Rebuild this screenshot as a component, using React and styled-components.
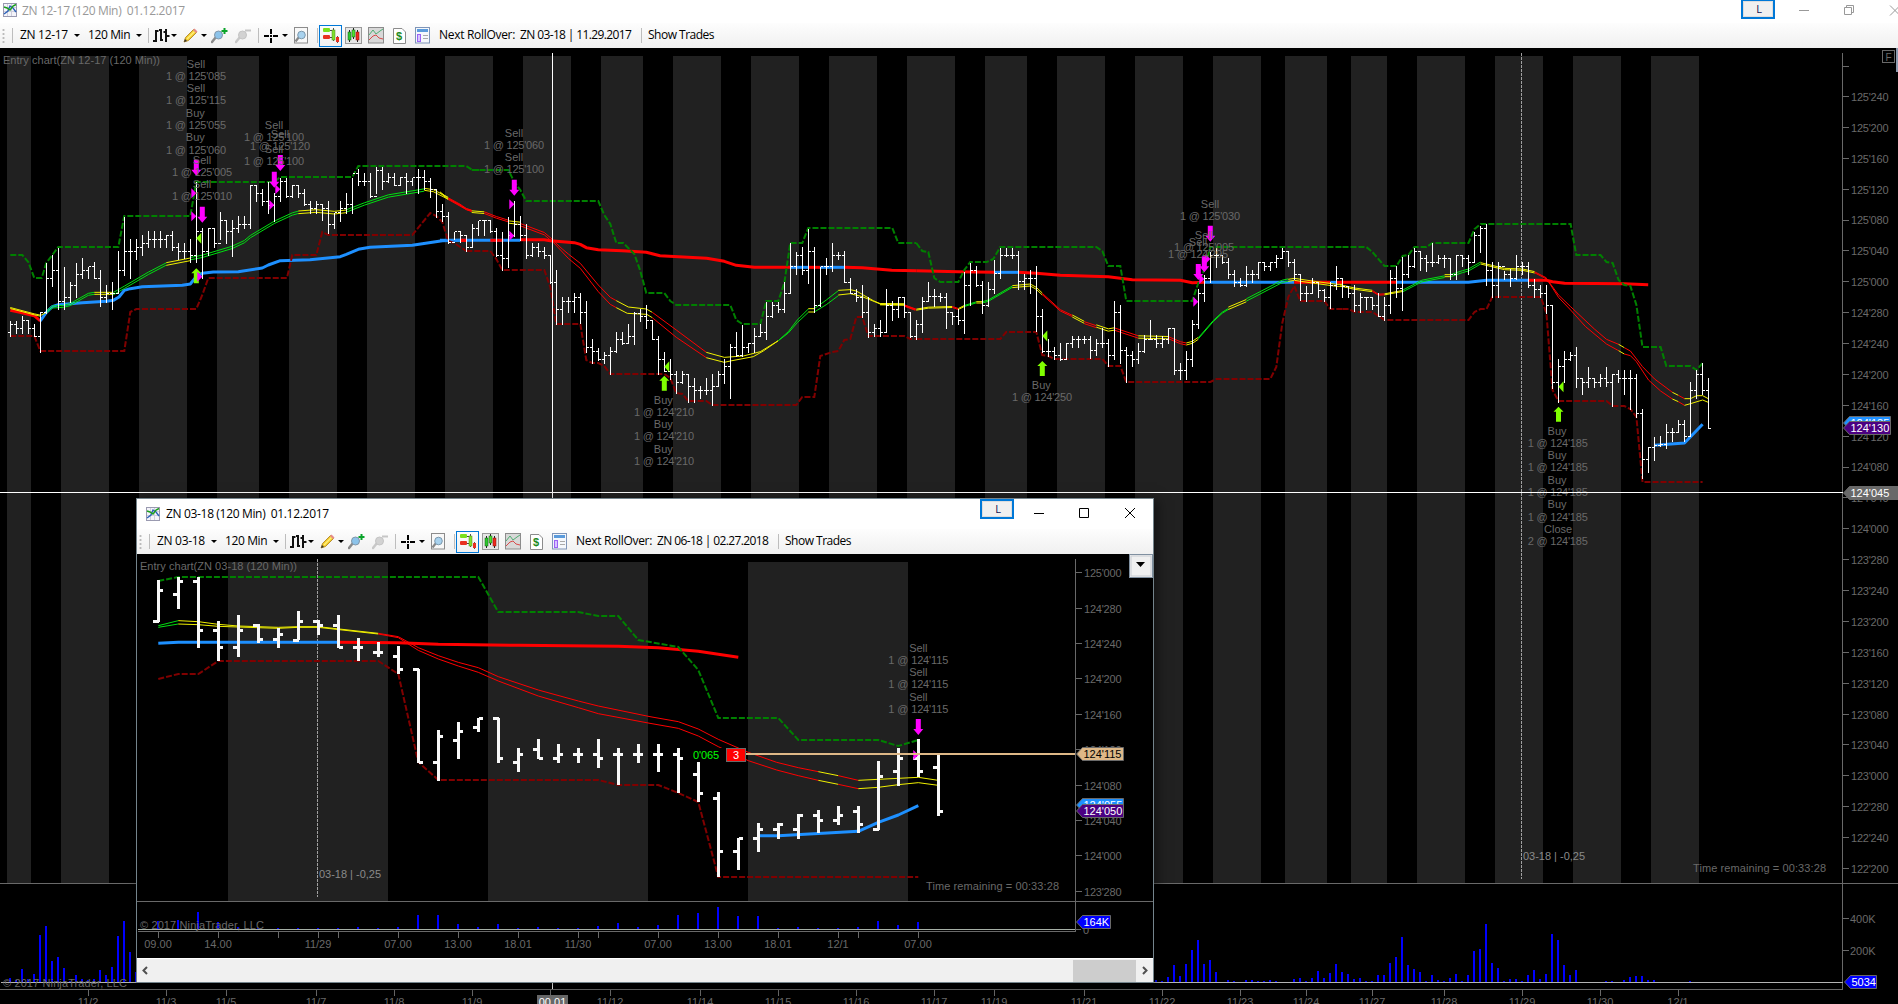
import React from 'react';
import styled, { createGlobalStyle } from 'styled-components';

const GREY = '#696969';
const BAND = '#212121';
const BLUE = '#1e90ff';
const RED = '#ff0000';
const LIME = '#00e010';
const YELLOW = '#f0f000';
const UPPER = '#008000';
const LOWER = '#800000';
const MAGENTA = '#ff00ff';
const CHARTREUSE = '#80ff00';

const GlobalStyle = createGlobalStyle`
  body {
    margin: 0;
    background: #000;
    overflow: hidden;
  }
`;

const Desktop = styled.div`
  position: relative;
  width: 1898px;
  height: 1004px;
  overflow: hidden;
  background: #000;
  font-family: 'Open Sans', 'Noto Sans', sans-serif;
`;

const MainWindow = styled.div`
  display: flex;
  flex-direction: column;
  width: 100%;
  height: 100%;
`;

const FloatingWindow = styled.div`
  position: absolute;
  left: 136px;
  top: 498px;
  width: 1018px;
  height: 485px;
  box-sizing: border-box;
  border: 1px solid #74848c;
  display: flex;
  flex-direction: column;
  background: #000;
  box-shadow: 3px 2px 12px rgba(0, 0, 0, 0.5);
`;

const TitleBar = styled.div`
  display: flex;
  align-items: ${p => (p.active ? 'center' : 'flex-start')};
  flex: none;
  height: ${p => (p.active ? 30 : 23)}px;
  box-sizing: border-box;
  padding-left: ${p => (p.active ? 9 : 3)}px;
  padding-top: ${p => (p.active ? 0 : 3)}px;
  background: #fff;
  color: ${p => (p.active ? '#000' : '#999')};
  white-space: nowrap;
`;

const TitleText = styled.span`
  font-size: 12px;
  line-height: 16px;
  letter-spacing: -0.3px;
  word-spacing: -0.2px;
  margin-left: ${p => (p.active ? 6 : 5)}px;
  white-space: pre;
`;

const Spacer = styled.div`
  flex: 1;
`;

const LinkButton = styled.div`
  flex: none;
  align-self: flex-start;
  width: 34px;
  height: 20px;
  margin-top: ${p => (p.active ? 0 : -4)}px;
  margin-right: ${p => p.gap}px;
  box-sizing: border-box;
  border: 2px solid #0078d7;
  background: #f0f0f0;
  box-shadow: inset 0 0 0 1px #ddd;
  color: #111150;
  font-size: 11px;
  line-height: 15px;
  text-align: center;
  padding-left: 2px;
`;

const WindowGlyphs = styled.svg`
  display: block;
  flex: none;
`;

const Bar = styled.div`
  display: flex;
  align-items: center;
  flex: none;
  height: 25px;
  background: linear-gradient(#fdfdfd, #f0f0f0);
  color: #000;
`;

const Grip = styled.div`
  width: 12px;
  height: 16px;
  flex: none;
  background: radial-gradient(circle, #bbb 1px, transparent 1.2px) 0 0 / 7px 4px repeat-y;
`;

const Sep = styled.div`
  width: 1px;
  height: 15px;
  flex: none;
  background: #bdbdbd;
`;

const Cell = styled.div`
  display: flex;
  align-items: center;
  justify-content: ${p => (p.center ? 'center' : 'flex-start')};
  flex: none;
  width: ${p => p.w}px;
  height: 22px;
  box-sizing: border-box;
  padding-left: ${p => p.pad || 0}px;
  margin-left: ${p => (p.selected ? 1 : 0)}px;
  border: ${p => (p.selected ? '1px solid #0078d7' : 'none')};
`;

const Label = styled.span`
  font-size: 12px;
  line-height: 16px;
  padding-bottom: 2px;
  letter-spacing: ${p => p.track || -0.3}px;
  white-space: pre;
`;

const Caret = styled.span`
  margin-left: ${p => p.gap || 4}px;
  border: 3px solid transparent;
  border-top-color: #000;
  border-bottom: none;
`;

const Plot = styled.svg`
  display: block;
  flex: none;
  font-family: 'Liberation Sans', Arial, sans-serif;
  font-size: 11px;
`;

const ScrollBar = styled.div`
  display: flex;
  align-items: center;
  flex: 1;
  background: #f0f0f0;
  border-top: 1px solid #fff;
`;

const Thumb = styled.div`
  width: 63px;
  height: 22px;
  background: #cdcdcd;
`;

const ScrollButton = styled.svg`
  flex: none;
  width: 17px;
  height: 17px;
`;

/* ---------- icons ---------- */

const icon = (w, h, children) => (
  <svg width={w} height={h} viewBox={`0 0 ${w} ${h}`}>
    {children}
  </svg>
);

const LogoIcon = () =>
  icon(
    14,
    14,
    <>
      <rect x=".5" y=".5" width="13" height="13" fill="#f4f4fa" stroke="#9a9ab0" />
      <path d="M4.500 1V13M8.500 1V13M1 4.500H13M1 8.500H13" stroke="#cfcfdd" />
      <path d="M1 11L5 8L7 3L10 5L13 9" fill="none" stroke="#2d62b8" strokeWidth="1.400" />
      <path d="M1 4L4 5L7 7L10 3L13 1.500" fill="none" stroke="#1ca01c" strokeWidth="1.400" />
    </>
  );

const BarsIcon = () =>
  icon(
    17,
    17,
    <path
      d="M3 3V15M0 14H3M8 2V14M3 4H5.500M6 3H8M8 13H10M13 2V15M10.500 5H13M13 9H16.500"
      stroke="#111"
      strokeWidth="2"
      fill="none"
    />
  );

const PencilIcon = () =>
  icon(
    15,
    15,
    <>
      <path d="M1 14L2.500 9.500L10.500 1.500L13.500 4.500L5.500 12.500Z" fill="#f2cb2c" stroke="#a87a18" strokeWidth=".8" />
      <path d="M4 11L11.500 3.500" stroke="#fff07a" strokeWidth="1.500" />
      <path d="M10 2L11.500 .5L14.500 3.500L13 5Z" fill="#e58a8a" />
      <path d="M1 14L2 11L4 13Z" fill="#333" />
    </>
  );

const LensIcon = ({ muted, plus }) =>
  icon(
    17,
    17,
    <>
      <path d="M5 10L1 15" stroke={muted ? '#c8c8c8' : '#8a8a8a'} strokeWidth="2.500" strokeLinecap="round" />
      <circle cx="7.500" cy="8" r="4" fill={muted ? '#d2d2d2' : '#8cc3ea'} stroke={muted ? '#c4c4c4' : '#8296a8'} />
      {plus ? (
        <path d="M13.500 1V7M10.500 4H16.500" stroke="#0aa32a" strokeWidth="2" />
      ) : (
        <path d="M10 3.500H16" stroke="#c6c6c6" strokeWidth="2" />
      )}
    </>
  );

const CrossIcon = () =>
  icon(16, 16, <path d="M7 1V6M7 10V15M0 8H5M9 8H14M6 8H8" stroke="#000" strokeWidth="2" />);

const PageLensIcon = () =>
  icon(
    16,
    17,
    <>
      <rect x="1.500" y=".5" width="13" height="15.500" fill="#f8f8f8" stroke="#8c8c8c" />
      <path d="M6 10L2.500 14.500" stroke="#888" strokeWidth="2.200" />
      <circle cx="8.500" cy="8" r="3.800" fill="#a8d2ee" stroke="#7b98ad" />
    </>
  );

const TraderIcon = () =>
  icon(
    16,
    17,
    <>
      <path d="M7 3.500H10.500M7 10.500H10.500" stroke="#444" />
      <rect x="0" y="1" width="7" height="4" rx="1" fill="#7be01c" />
      <rect x="0" y="8" width="7" height="4" rx="1" fill="#e83020" />
      <path d="M10.500 1V14M14.500 9V16" stroke="#555" />
      <rect x="9" y="3" width="3" height="10" fill="#7fe02c" stroke="#4c8c18" strokeWidth=".5" />
      <rect x="13" y="10" width="3" height="5" fill="#e83020" />
    </>
  );

const CandlesIcon = () =>
  icon(
    17,
    17,
    <>
      <rect x=".5" y=".5" width="16" height="16" fill="#e6e6e6" stroke="#9a9a9a" />
      <path d="M4.500 3V15M8.500 1V12M12.500 3V15" stroke="#222" />
      <rect x="3" y="5" width="3" height="8" fill="#2fc62f" stroke="#175d17" strokeWidth=".5" />
      <rect x="7" y="3" width="3" height="7" fill="#4fe02f" stroke="#175d17" strokeWidth=".5" />
      <rect x="11" y="5" width="3" height="8" fill="#f02a1c" stroke="#7c1510" strokeWidth=".5" />
    </>
  );

const IndicatorIcon = () =>
  icon(
    16,
    17,
    <>
      <rect x=".5" y=".5" width="15" height="15.500" fill="#d8d8d8" stroke="#8c8c8c" />
      <path d="M1 8L5 3L8 7L12 4L15 2" fill="none" stroke="#4fae72" />
      <path d="M1 13L5 9L8 8L11 11L15 12" fill="none" stroke="#d84a4a" />
    </>
  );

const DollarIcon = () =>
  icon(
    13,
    16,
    <>
      <path d="M.5 .5H9L12.500 4V15.500H.5Z" fill="#fff" stroke="#8c8c8c" />
      <text x="3" y="12" fontSize="11" fontWeight="bold" fontFamily="Liberation Sans, sans-serif" fill="#1c8a1c">
        $
      </text>
    </>
  );

const PropertiesIcon = () =>
  icon(
    15,
    17,
    <>
      <rect x=".5" y=".5" width="14" height="15.500" fill="#f5f8fc" stroke="#7f95b8" />
      <rect x="2" y="2" width="11" height="3" fill="#5b9bdc" />
      <rect x="2.500" y="7.500" width="3" height="7" fill="#d8c4ff" stroke="#9a63f5" />
      <path d="M8 8.500H13M8 11.500H13" stroke="#aaa" />
    </>
  );

/* ---------- toolbar ---------- */

function ChartToolbar({ contract, next }) {
  return (
    <Bar>
      <Grip />
      <Sep />
      <Cell w={69} pad={7}>
        <Label>{contract}</Label>
        <Caret gap={6} />
      </Cell>
      <Cell w={66} pad={6}>
        <Label track={-0.38}>120 Min</Label>
        <Caret gap={6} />
      </Cell>
      <Sep />
      <Cell w={31} pad={4}>
        <BarsIcon />
        <Caret gap={1} />
      </Cell>
      <Cell w={29} pad={3}>
        <PencilIcon />
        <Caret gap={3} />
      </Cell>
      <Cell w={23} pad={2}>
        <LensIcon plus />
      </Cell>
      <Cell w={26} pad={3}>
        <LensIcon muted />
      </Cell>
      <Sep />
      <Cell w={32} pad={5}>
        <CrossIcon />
        <Caret gap={2} />
      </Cell>
      <Cell w={26} pad={2}>
        <PageLensIcon />
      </Cell>
      <Sep />
      <Cell w={23} center selected>
        <TraderIcon />
      </Cell>
      <Cell w={22} center>
        <CandlesIcon />
      </Cell>
      <Cell w={24} center>
        <IndicatorIcon />
      </Cell>
      <Cell w={22} center>
        <DollarIcon />
      </Cell>
      <Cell w={24} center>
        <PropertiesIcon />
      </Cell>
      <Cell w={83} pad={5}>
        <Label>Next RollOver:</Label>
      </Cell>
      <Cell w={124} pad={3}>
        <Label track={-0.62}>{next}</Label>
      </Cell>
      <Sep />
      <Cell w={90} pad={6}>
        <Label track={-0.5}>Show Trades</Label>
      </Cell>
    </Bar>
  );
}

/* ---------- chart data ---------- */

// Sample grids: every series is stored in grid units and projected to pixels.
const A = { ox: 0, oy: 50, kx: 3, ky: 3 };
const B = { ox: 440, oy: 100, kx: 3, ky: 3 };
const C = { ox: 880, oy: 180, kx: 3, ky: 3 };
const D = { ox: 1340, oy: 180, kx: 2.81, ky: 3 };
const P = { ox: 130, oy: 490, kx: 3, ky: 3 };

// high,low,close - every bar opens on the previous close
const mainBars = [
  [A, '812,858,823 812,848,835 798,848,812 810,848,835 822,858,858 785,905,788 640,790,685 615,708,660 595,778,755 650,778,742 697,755,707 638,742,672 625,685,660 650,685,648 636,685,685 660,767,742 705,755,730 697,778,730 603,730,660 500,675,603 567,685,603 567,628,592 555,615,580 543,592,567 543,592,567 543,592,567 555,592,555 543,600,592 580,628,603 580,625,603 567,637,615 395,637,545 535,685,603 535,615,535 535,592,580 487,567,510 510,580,545 510,617,535 498,545,522 498,535,522 406,535,406 406,453,430 418,465,453 395,488,465 430,513,440 383,453,395 383,440,440 406,440,406 406,440,430 418,465,463 453,488,475 453,488,463 463,510,475 453,550,522 488,535,488 453,513,475 430,488,463 383,488,370 358,405,395 370,405,395 370,440,440 350,430,360 350,418,395 370,395,382 370,406,405 380,405,382 370,430,395 383,405,383 358,430,383 360,418,395 383,440,418 418,500,485 462,512,498'],
  [B, '337,430,428 395,418,395 393,425,405 407,453,442 373,442,385 362,405,362 360,405,362 362,397,395 385,468,465 395,510,475 350,500,405 303,408,373 348,420,407 373,475,465 430,467,442 430,467,453 442,475,465 465,548,548 510,673,628 592,673,603 592,637,603 580,637,592 580,670,637 603,755,742 718,790,755 743,780,778 755,790,767 742,823,755 697,755,718 697,732,730 672,730,708 637,732,640 628,662,650 616,685,660 660,718,718 708,822,778 755,813,813 778,837,823 812,880,848 812,850,823 823,905,858 835,905,872 858,895,872 835,882,872 823,915,858 812,858,823 778,848,800 732,893,742 697,767,765 675,767,742 730,755,730 685,755,708 672,708,697 605,718,650 605,650,616 605,637,628 545,637,580 430,580,500 455,523,465 442,523,512 388,548,453 442,637,615 500,617,500 475,523,498 430,512,465 455,477,465 453,547,547 535,580,580 567,603,592 555,650,637 592,710,697 673,708,685 660,707,697 567,697,616 603,660,628 592,650,592 592,650,637 637,710,710'],
  [C, '420,478,433 350,457,363 307,363,350 327,378,350 340,363,352 340,445,397 397,432,408 387,433,420 275,458,315 250,375,270 258,317,315 302,398,375 307,377,328 240,340,280 203,293,225 203,228,225 203,235,225 213,328,305 283,328,295 270,340,295 258,453,408 387,515,515 478,528,513 502,538,525 490,540,537 490,538,490 468,502,478 468,502,478 468,490,478 468,535,512 478,525,490 445,502,490 478,558,525 363,538,397 375,550,512 502,607,525 513,558,538 490,550,513 465,515,478 420,478,478 465,502,490 468,502,478 445,490,445 445,583,570 550,597,570 513,597,537 420,558,433 327,445,340 285,363,295 215,305,225 205,260,225 228,248,247 235,295,283 270,317,307 295,318,317 258,317,283 270,305,283 247,293,247 247,270,260 247,270,247 225,260,235 203,235,213 213,258,247 237,297,283 283,360,340 317,363,340 295,340,307 307,352,330 328,363,352 305,385,317 258,328,295'],
  [D, '295,352,318 318,352,340 316,392,375 340,395,352 352,387,352 352,387,375 340,408,408 352,420,375 270,398,295 258,352,325 232,390,283 225,290,258 205,260,213 213,270,235 225,272,247 190,258,247 225,250,235 225,260,235 235,297,283 225,297,225 225,258,235 225,283,247 155,247,167 137,215,145 133,316,270 247,352,316 247,350,258 272,297,283 268,317,295 225,297,258 247,283,260 247,320,316 297,352,328 316,350,340 316,400,375 375,625,607 537,665,560 513,607,537 515,540,525 502,620,595 595,642,607 560,620,595 597,620,607 583,617,595 560,617,607 583,677,583 570,607,595 570,642,595 570,688,595 583,710,700 688,895,838 802,875,802 770,840,795 768,797,793 732,803,757 745,782,757 720,757,732 720,783,768 607,768,630 570,655,583 550,642,630 593,745,745'],
];

// high,low,open,close
const popupBars =
  '270,395,395,300 260,357,313,273 260,473,273,421 392,513,421,473 375,500,473,421 403,460,406,449 415,473,449,433 363,450,450,394 390,435,394,406 375,475,406,472 445,513,472,472 457,500,487,487 468,553,499,538 537,820,538,817 720,872,817,739 697,807,751,724 683,725,712,685 683,818,685,805 773,846,817,793 747,808,778,805 762,818,805,793 773,818,793,793 747,833,793,805 775,885,793,793 762,818,793,793 762,845,793,793 773,910,793,805 816,937,852,910 907,1160,925,1084 1043,1140,1084,1045 1000,1085,1045,1018 1000,1047,1018,1003 973,1047,1018,975 961,1030,976,991 948,1005,991,976 948,1030,964,1003 813,1020,1018,859 773,887,844,805 747,860,805,844 795,977,832,965';

const mainVolume = {
  0: '4 2 13 3 8 47 56 21 25 14 1 7 3 2 3 12 7 15 46 61 30 10',
  191: '2 1 5 17 6 18 32 42 18 22 10 0 2 1 0 2 2 1 1 2 1 0 0 3 4 1 4 11 4 9 18 10 8 3 4 1 1 7 7 19 25 45 17 13 10 1 7 2 1 4 8 1 7 31 33 58 19 14 1 3 3 1 7 12 3 8 48 42 17 7 12 0 0 0 0 1 1 0 2 5 6 6 2 2 0 0 0 0 0 1',
};
const popupVolume = '8 9 17 7 2 1 1 1 1 1 2 1 2 14 14 5 2 5 1 2 1 1 3 6 2 4 14 16 22 13 13 1 2 1 1 2 8 4 7';

const upperBand = [
  [A, '31,615 67,615 85,635 103,685 125,685 139,640 175,592 355,592 373,499 571,499 589,395 823,395 841,382 1057,382 1075,349 1399,349 1417,361 1440,361'],
  [B, '95,211 205,211 223,245 241,270 259,304 475,304 493,345 511,373 529,430 550,430 583,463 600,510 619,580 673,580 691,604 709,616 871,616 889,660 907,673 961,673 979,604 1015,604 1033,550 1051,430 1087,430 1105,385 1357,385 1375,430 1429,430'],
  [C, '109,190 127,213 145,215 163,295 181,307 235,307 253,270 271,247 320,247 340,238 361,202 649,202 667,213 685,259 721,259 739,364 937,364 955,310 973,270 991,202 1387,202'],
  [D, '7,202 74,202 91,215 125,259 159,259 176,227 192,225 209,202 243,202 260,190 361,190 378,147 395,133 648,133 664,226 732,226 749,247 766,248 783,300 799,315 816,317 833,375 850,502 901,502 917,559 985,559 1002,570 1019,550'],
];

const lowerBand = [
  [A, '31,858 103,858 121,904 373,904 391,787 409,778 589,778 607,735 625,685 861,685 877,616 949,616 967,547 985,555 1237,555 1291,490 1309,497 1327,515 1345,574 1363,580 1381,592 1399,604'],
  [B, '79,454 151,454 169,478 187,511 313,511 331,560 349,673 421,673 439,780 457,790 475,790 493,797 511,823 673,823 691,835 709,880 727,882 745,904 799,904 817,915 1069,915 1087,892 1123,892 1141,767 1177,755 1195,752 1213,720 1231,718 1249,650 1267,650 1285,709 1393,709 1411,718 1429,718'],
  [C, '109,478 361,478 379,457 469,457 487,525 505,527 523,538 667,538 685,559 721,559 739,607 991,607 1009,596 1171,596 1189,560 1207,430 1225,350 1243,318 1261,364 1333,364 1351,388 1387,388'],
  [D, '7,388 24,388 41,397 91,397 125,421 361,421 378,397 395,388 412,386 428,352 564,352 580,400 597,630 614,664 749,664 766,677 799,677 816,688 833,712 850,907 1019,907'],
];

const baseline = [
  [A, RED, '31,781 60,787 103,797 121,813'],
  [A, BLUE, '121,813 139,787 157,770 175,764 247,758 320,754 340,751 357,741 373,721 391,716 427,710 547,706 571,702 589,680 607,670 640,666 715,665 787,654 805,645 841,632 930,629 1021,620 1039,613 1075,598 1110,592 1237,586 1327,572 1381,571'],
  [B, BLUE, '0,421 241,421'],
  [A, RED, '1383,571 1399,571'],
  [B, RED, '61,421 79,421'],
  [B, RED, '151,421 190,421'],
  [B, RED, '241,419 313,419 331,422 403,428 421,433 439,443 475,449 547,452 619,457 660,467 800,475 853,484 889,496 943,502 1051,502'],
  [B, BLUE, '1051,502 1105,502'],
  [B, RED, '1105,502 1141,502'],
  [B, BLUE, '1141,502 1213,502'],
  [B, RED, '1213,502 1267,503 1355,511 1429,512'],
  [C, RED, '109,272 235,275 343,277'],
  [C, BLUE, '343,277 415,277'],
  [C, RED, '415,277 469,280 541,286 685,290 757,299 901,301 937,308 973,307'],
  [C, BLUE, '973,307 1243,307'],
  [C, RED, '1243,307 1351,307'],
  [C, BLUE, '1351,307 1369,307'],
  [C, RED, '1369,307 1387,307'],
  [D, RED, '0,307 159,307'],
  [D, BLUE, '159,307 361,307 412,301 530,301'],
  [D, RED, '530,301 580,301 597,305 631,310 799,311 866,314'],
  [D, BLUE, '884,796 968,789 1019,733'],
];

// grid, colour, points, distance between the twin lines
const averages = [
  [A, YELLOW, '31,774 103,793 121,797', 3],
  [A, YELLOW, '121,797 139,787', 0],
  [A, LIME, '139,786 157,771 190,769 210,764 265,733 283,730', 6],
  [A, YELLOW, '283,730 340,730', 6],
  [A, LIME, '340,731 373,712 445,670 499,642', 7],
  [A, YELLOW, '499,642 571,628', 8],
  [A, LIME, '571,626 607,619 697,592 733,575 751,560 823,517 877,492 895,487', 7],
  [A, YELLOW, '895,487 949,483 1003,488 1039,484', 8],
  [A, LIME, '1039,483 1093,462 1165,438 1273,420', 7],
  [A, YELLOW, '1273,418 1300,422 1345,445', 6],
  [A, RED, '1345,445 1380,464 1399,477 1415,482', 3],
  [B, YELLOW, '0,277 25,297', 3],
  [B, RED, '25,297 80,328 95,333', 3],
  [B, YELLOW, '95,335 133,338', 5],
  [B, RED, '133,338 169,352 205,363', 5],
  [B, YELLOW, '205,366 241,370', 7],
  [B, RED, '241,374 313,401 340,424', 7],
  [B, RED, '340,422 367,447 385,462 421,490 475,555 511,592 529,602', 0],
  [B, RED, '340,427 385,475 421,505 475,575 511,613 529,623', 0],
  [B, YELLOW, '529,602 565,621 619,627 637,637', 0],
  [B, YELLOW, '529,623 562,640 620,643 637,653', 0],
  [B, RED, '637,637 709,690 799,757', 0],
  [B, RED, '637,653 709,712 799,773', 0],
  [B, YELLOW, '799,757 853,772 910,768 961,755 1015,722', 0],
  [B, YELLOW, '799,773 853,787 871,783 940,770 970,753 1015,722', 0],
  [B, LIME, '1015,722 1045,695 1072,660 1105,627', 0],
  [B, LIME, '1015,722 1045,699 1072,668 1105,637', 0],
  [B, YELLOW, '1105,631 1123,631', 10],
  [B, LIME, '1123,626 1159,600 1195,572', 0],
  [B, LIME, '1123,636 1159,614 1195,587', 0],
  [B, YELLOW, '1195,571 1231,569 1249,573 1300,602 1321,611', 0],
  [B, YELLOW, '1195,585 1231,581 1267,590 1321,612', 0],
  [B, YELLOW, '1321,612 1393,613', 3],
  [B, RED, '1393,617 1425,629', 3],
  [C, YELLOW, '0,373 73,374', 3],
  [C, RED, '73,376 109,389', 3],
  [C, YELLOW, '109,389 145,383 217,381', 3],
  [C, RED, '217,381 235,387', 3],
  [C, YELLOW, '235,387 253,378', 3],
  [C, LIME, '253,378 289,367', 3],
  [C, YELLOW, '289,367 307,367', 4],
  [C, LIME, '307,367 325,362 397,320', 4],
  [C, YELLOW, '397,320 451,315 469,325 487,342', 6],
  [C, RED, '487,342 541,391 577,408', 4],
  [C, YELLOW, '577,408 613,427', 6],
  [C, RED, '613,428 649,440', 6],
  [C, YELLOW, '649,438 685,450 703,447', 7],
  [C, RED, '703,447 775,471', 7],
  [C, YELLOW, '775,471 865,473', 7],
  [C, RED, '865,473 901,488 919,492', 6],
  [C, YELLOW, '919,492 937,487 955,475', 6],
  [C, LIME, '955,475 1000,423 1027,398 1045,387', 3],
  [C, YELLOW, '1045,385 1099,362', 7],
  [C, LIME, '1099,360 1207,304 1225,300', 7],
  [C, YELLOW, '1225,301 1243,298 1297,306 1370,316 1387,316', 6],
  [D, YELLOW, '0,316 41,326 91,333', 4],
  [D, RED, '91,333 108,344 125,343', 3],
  [D, YELLOW, '125,343 176,333', 3],
  [D, LIME, '176,333 230,303 294,290', 5],
  [D, YELLOW, '294,287 311,287', 6],
  [D, LIME, '311,287 344,275 361,270 395,249', 6],
  [D, YELLOW, '395,250 462,267 513,269 547,277', 4],
  [D, RED, '547,277 580,295', 3],
  [D, RED, '580,295 614,345 648,380 715,447 749,478 783,493', 0],
  [D, RED, '580,295 614,352 648,390 690,440 749,492 783,512', 0],
  [D, YELLOW, '783,493 799,503', 0],
  [D, YELLOW, '783,512 799,522', 0],
  [D, RED, '799,503 816,513 850,560 884,597 934,637', 0],
  [D, RED, '799,522 816,527 833,545 867,600 901,633 934,657', 0],
  [D, YELLOW, '934,637 951,646', 0],
  [D, YELLOW, '934,657 951,665', 0],
  [D, RED, '951,646 968,656', 0],
  [D, RED, '951,665 968,676', 0],
  [D, YELLOW, '968,656 985,656 1002,647 1019,647 1035,656', 0],
  [D, YELLOW, '968,676 985,671 1019,660 1035,667', 0],
];

const popupUpper = [
  [P, '85,273 145,262 1045,262 1105,367 1345,367 1405,379 1465,379 1525,449 1645,472 1705,540 1765,685 1945,685 2005,751 2245,751 2305,767 2365,751'],
];
const popupLower = [
  [P, '85,566 145,553 205,553 265,514 745,514 805,553 865,817 925,871 1405,871 1465,886 1585,886 1645,910 1705,937 1765,1162 2365,1162'],
];
const popupBaseline = [
  [P, BLUE, '85,460 145,457 625,457'],
  [P, RED, '625,457 805,458 925,463 1165,466 1465,469 1585,473 1705,484 1825,502'],
  [P, BLUE, '1885,1037 1945,1037 2185,1024 2245,997 2305,975 2365,947'],
];
const popupAverages = [
  [P, LIME, '85,407 145,392', 0],
  [P, LIME, '85,412 145,402', 0],
  [P, YELLOW, '145,392 205,395 265,403 325,408 445,412 505,410 565,410 745,430', 0],
  [P, YELLOW, '145,402 205,404 265,409 325,411 445,415 505,412 565,412 745,432', 0],
  [P, RED, '745,430 805,440 865,473 925,497 985,517 1045,533 1105,560 1225,600 1345,633 1405,648 1560,680 1645,695 1705,717 1765,748 1855,787 1940,817 2005,833 2065,845', 0],
  [P, RED, '745,432 805,443 865,481 925,507 985,528 1045,547 1105,573 1225,618 1345,653 1405,671 1560,700 1645,715 1705,738 1765,770 1855,812 1940,840 2005,857 2065,871', 0],
  [P, YELLOW, '2065,845 2125,857', 0],
  [P, YELLOW, '2065,871 2125,883', 0],
  [P, RED, '2125,857 2185,871', 0],
  [P, RED, '2125,883 2185,896', 0],
  [P, YELLOW, '2185,871 2245,868 2305,865 2365,862 2425,871', 0],
  [P, YELLOW, '2185,896 2245,892 2305,884 2365,878 2425,886', 0],
];

const mainBands = [
  [7, 31], [61, 109], [139, 187], [217, 259], [289, 337], [367, 415], [445, 493], [523, 571],
  [601, 643], [673, 721], [751, 799], [829, 877], [907, 955], [985, 1027], [1057, 1105],
  [1135, 1183], [1213, 1261], [1285, 1327], [1351, 1387], [1417, 1465], [1495, 1543],
  [1573, 1621], [1651, 1699],
];
const popupBands = [[228, 388], [488, 648], [748, 908]];

const mainTrades = [
  [A, 588, 42, 'Sell'], [A, 588, 78, "1 @ 125'085"], [A, 588, 115, 'Sell'], [A, 588, 150, "1 @ 125'115"],
  [A, 586, 190, 'Buy'], [A, 588, 225, "1 @ 125'055"], [A, 586, 262, 'Buy'], [A, 588, 300, "1 @ 125'060"],
  [A, 606, 330, 'Sell'], [A, 606, 366, "1 @ 125'005"], [A, 606, 403, 'Sell'], [A, 606, 438, "1 @ 125'010"],
  [A, 822, 225, 'Sell'], [A, 822, 262, "1 @ 125'100"], [A, 840, 252, 'Sell'], [A, 840, 288, "1 @ 125'120"],
  [A, 822, 297, 'Sell'], [A, 822, 333, "1 @ 125'100"],
  [B, 222, 100, 'Sell'], [B, 222, 135, "1 @ 125'060"], [B, 222, 172, 'Sell'], [B, 222, 208, "1 @ 125'100"],
  [B, 670, 901, 'Buy'], [B, 672, 936, "1 @ 124'210"], [B, 670, 973, 'Buy'], [B, 672, 1008, "1 @ 124'210"],
  [B, 670, 1048, 'Buy'], [B, 672, 1084, "1 @ 124'210"],
  [C, 990, 72, 'Sell'], [C, 990, 108, "1 @ 125'030"], [C, 972, 165, 'Sell'], [C, 972, 201, "1 @ 125'005"],
  [C, 954, 187, 'Sell'], [C, 954, 222, "1 @ 124'295"], [C, 484, 615, 'Buy'], [C, 486, 652, "1 @ 124'250"],
  [D, 610, 753, 'Buy'], [D, 612, 790, "1 @ 124'185"], [D, 610, 826, 'Buy'], [D, 612, 862, "1 @ 124'185"],
  [D, 610, 901, 'Buy'], [D, 612, 937, "1 @ 124'185"], [D, 610, 973, 'Buy'], [D, 612, 1011, "1 @ 124'185"],
  [D, 613, 1048, 'Close'], [D, 612, 1084, "2 @ 124'185"],
];
const popupTrades = [
  [P, 2365, 474, 'Sell'], [P, 2365, 511, "1 @ 124'115"], [P, 2365, 547, 'Sell'],
  [P, 2365, 583, "1 @ 124'115"], [P, 2365, 621, 'Sell'], [P, 2365, 658, "1 @ 124'115"],
];

const mainMarkers = [
  ['sell', A, 589, 377], ['sell', A, 607, 518], ['sell', A, 823, 413], ['sell', A, 841, 363],
  ['sell', B, 223, 287], ['sell', C, 991, 185], ['sell', C, 973, 277], ['sell', C, 955, 300],
  ['buy', A, 589, 655], ['buy', B, 673, 827], ['buy', C, 487, 543], ['buy', D, 614, 680],
  ['out', A, 589, 430], ['out', A, 589, 499], ['out', A, 841, 418], ['out', A, 823, 465],
  ['out', A, 607, 680], ['out', B, 223, 313], ['out', B, 223, 407], ['out', C, 955, 365],
  ['out', C, 973, 297], ['out', C, 991, 237],
  ['in', A, 589, 565], ['in', B, 673, 800], ['in', C, 487, 468], ['in', D, 614, 620],
];
const popupMarkers = [['sell', P, 2365, 735], ['out', P, 2365, 795]];

// prices are quoted in 32nds, so a full point is eight labels
const steps = ['240', '200', '160', '120', '080', '040', '000', '280'];
const mainPrices = Array.from({ length: 26 }, (_, i) => [
  `${125 - Math.floor((i + 1) / 8)}'${steps[i % 8]}`,
  96.5 + i * 30.88,
]);
const popupPrices = [
  ["125'000", 572.5], ["124'280", 608.5], ["124'240", 643.5], ["124'200", 678.5], ["124'160", 714.5],
  ["124'120", 749.5], ["124'080", 785.5], ["124'040", 820.5], ["124'000", 855.5], ["123'280", 891.5],
];
const mainDates = [
  ['11/2', 88], ['11/3', 166], ['11/5', 226], ['11/7', 316], ['11/8', 394], ['11/9', 472], ['11/12', 610],
  ['11/14', 700], ['11/15', 778], ['11/16', 856], ['11/17', 934], ['11/19', 994], ['11/21', 1084],
  ['11/22', 1162], ['11/23', 1240], ['11/24', 1306], ['11/27', 1372], ['11/28', 1444], ['11/29', 1522],
  ['11/30', 1600], ['12/1', 1678],
];
const popupDates = [
  ['09.00', 158], ['14.00', 218], ['', 278], ['11/29', 318], ['', 338], ['07.00', 398], ['13.00', 458],
  ['18.01', 518], ['11/30', 578], ['', 598], ['07.00', 658], ['13.00', 718], ['18.01', 778], ['12/1', 838],
  ['', 858], ['07.00', 918],
];

/* ---------- chart parts ---------- */

const px = (g, x) => g.ox + x / g.kx;
const py = (g, y) => g.oy + y / g.ky;
const mid = v => Math.floor(v) + 0.5;

function project(g, points, dy = 0, snap) {
  return points
    .split(' ')
    .map(pt => {
      const [x, y] = pt.split(',').map(Number);
      const v = py(g, y + dy);
      return `${px(g, x).toFixed(1)},${snap ? Math.round(v) : v.toFixed(2)}`;
    })
    .join(' ');
}

function mainBarPath() {
  let d = '';
  let i = 0;
  let open = py(A, 847);
  mainBars.forEach(([g, text]) => {
    text.split(' ').forEach(bar => {
      const [hi, lo, close] = bar.split(',').map(v => py(g, Number(v)));
      const x = 10.5 + 6 * i;
      d += `M${x} ${Math.round(hi)}V${Math.round(lo) + 1}`;
      d += `M${x - 2.5} ${mid(open)}H${x}M${x} ${mid(close)}H${x + 2.5}`;
      open = close;
      i += 1;
    });
  });
  return d;
}

function popupBarPath() {
  return popupBars
    .split(' ')
    .map((bar, i) => {
      const [hi, lo, open, close] = bar.split(',').map(v => py(P, Number(v)));
      const x = 158.5 + 20 * i;
      return `M${x} ${Math.round(hi)}V${Math.round(lo)}M${x - 5.5} ${mid(open)}H${x}M${x} ${mid(close)}H${x + 4.5}`;
    })
    .join('');
}

const Stripes = ({ bands, top, bottom }) =>
  bands.map(([a, b]) => <rect key={a} x={a} y={top} width={b - a} height={bottom - top} fill={BAND} />);

const Dashed = ({ parts, color }) =>
  parts.map(([g, pts], i) => (
    <polyline key={i} points={project(g, pts, 0, true)} fill="none" stroke={color} strokeWidth="2" strokeDasharray="6 2" />
  ));

const Thick = ({ parts }) =>
  parts.map(([g, color, pts], i) => (
    <polyline key={i} points={project(g, pts)} fill="none" stroke={color} strokeWidth="3" strokeLinejoin="round" />
  ));

const Twins = ({ parts }) =>
  parts.map(([g, color, pts, gap], i) => (
    <g key={i} fill="none" stroke={color} strokeWidth="1">
      <polyline points={project(g, pts, -gap / 2)} />
      {gap > 0 && <polyline points={project(g, pts, gap / 2)} />}
    </g>
  ));

const shapes = {
  sell: [MAGENTA, 'M-2.500 -16H2.500V-6H5L0 0L-5 -6H-2.500Z'],
  buy: [CHARTREUSE, 'M-2.500 15H2.500V5H5L0 0L-5 5H-2.500Z'],
  out: [MAGENTA, 'M0 0L-5 -5V5Z'],
  in: [CHARTREUSE, 'M0 0L5 -5.500V5.500Z'],
};

const Markers = ({ items }) =>
  items.map(([kind, g, x, y], i) => (
    <path key={i} d={shapes[kind][1]} fill={shapes[kind][0]} transform={`translate(${px(g, x).toFixed(1)} ${py(g, y).toFixed(1)})`} />
  ));

const Trades = ({ items }) =>
  items.map(([g, x, y, text], i) => (
    <text
      key={i}
      x={px(g, x)}
      y={Math.round(py(g, y) + 4)}
      textAnchor="middle"
      fill={GREY}
      textLength={text.length > 6 ? 60 : undefined}
    >
      {text}
    </text>
  ));

const Prices = ({ items, x }) =>
  items.map(([text, y]) => (
    <g key={text}>
      <path d={`M${x} ${mid(y)}h6`} stroke={GREY} />
      <text x={x + 8} y={Math.round(y + 4.4)} fill={GREY} textLength="37.500">
        {text}
      </text>
    </g>
  ));

const Dates = ({ items, top, baselineY }) =>
  items.map(([text, x]) => (
    <g key={x}>
      <path d={`M${x + 0.5} ${top}v6`} stroke={GREY} />
      <text x={x} y={baselineY} fill={GREY} textAnchor="middle">
        {text}
      </text>
    </g>
  ));

const Tag = ({ x, y, w, fill, color = '#fff', stroke = GREY, children }) => (
  <g>
    <path d={`M${x} ${y + 6.5}L${x + 6} ${y}H${x + w}V${y + 13}H${x + 6}Z`} fill={fill} stroke={stroke} />
    <text x={x + 7} y={y + 10.5} fill={color}>
      {children}
    </text>
  </g>
);

const Volume = ({ text, x0, step, base, from = 0 }) =>
  text.split(' ').map((h, i) => <rect key={i} x={x0 + step * (i + from)} y={base - h} width="2" height={h} fill="#0000ff" />);

function MainChart() {
  return (
    <Plot width="1898" height="956" viewBox="0 48 1898 956">
      <Stripes bands={mainBands} top={56} bottom={883} />
      <path d="M1521.500 53V879" stroke="#a0a0a0" strokeDasharray="3 1" />
      <Thick parts={baseline} />
      <Twins parts={averages} />
      <Dashed parts={upperBand} color={UPPER} />
      <Dashed parts={lowerBand} color={LOWER} />
      <path d={mainBarPath()} stroke="#fff" fill="none" shapeRendering="crispEdges" />
      <Markers items={mainMarkers} />
      <Trades items={mainTrades} />
      <text x="3" y="64" fill={GREY} textLength="157">
        Entry chart(ZN 12-17 (120 Min))
      </text>
      <text x="1523" y="860" fill="#8a8a8a" textLength="62">
        03-18 | -0,25
      </text>
      <text x="1693" y="872" fill={GREY} textLength="133">
        Time remaining = 00:33:28
      </text>

      <path d="M0 883.500H1898M1842.500 53V990M0 989.500H1843M1843 66.500h6" stroke={GREY} fill="none" />
      <Prices items={mainPrices} x={1843} />
      <path d="M1843 918.500h6M1843 950.500h6" stroke={GREY} />
      <text x="1850" y="923" fill={GREY}>400K</text>
      <text x="1850" y="955" fill={GREY}>200K</text>

      {Object.keys(mainVolume).map(k => (
        <Volume key={k} text={mainVolume[k]} from={Number(k)} x0={9} step={6} base={982} />
      ))}
      <path d="M1 982.500H1843" stroke="#b4b4b4" />
      <text x="3" y="987" fill={GREY} textLength="124">
        © 2017 NinjaTrader, LLC
      </text>
      <Dates items={mainDates} top={990} baselineY={1006} />

      <path d="M552.500 53V989M0 492.500H1843" stroke="#fff" shapeRendering="crispEdges" />
      <path d="M550.500 990v5" stroke={GREY} />
      <rect x="537" y="995" width="31" height="12" fill={GREY} />
      <text x="552.500" y="1006" fill="#fff" textAnchor="middle">
        00.01
      </text>

      <Tag x={1843.5} y={416.5} w={47} fill={BLUE}>124'135</Tag>
      <Tag x={1843.5} y={421.5} w={47} fill="#4b0082">124'130</Tag>
      <Tag x={1843.5} y={486.5} w={56} fill={GREY}>124'045</Tag>
      <Tag x={1844.5} y={975.5} w={32} fill="#0000ff">5034</Tag>

      <rect x="1882.500" y="50.500" width="12" height="12" fill="none" stroke={GREY} />
      <text x="1885.500" y="60.500" fill={GREY} fontSize="10">
        F
      </text>
      <path d="M1897 48V72" stroke="#8d9bb0" strokeWidth="2" />
    </Plot>
  );
}

function PopupChart() {
  return (
    <Plot width="1016" height="404" viewBox="137 554 1016 404">
      <Stripes bands={popupBands} top={562} bottom={901} />
      <path d="M317.500 559V897" stroke="#a0a0a0" strokeDasharray="3 1" />
      <Thick parts={popupBaseline} />
      <Twins parts={popupAverages} />
      <Dashed parts={popupUpper} color={UPPER} />
      <Dashed parts={popupLower} color={LOWER} />
      <path d={popupBarPath()} stroke="#f8f8f8" strokeWidth="3" fill="none" shapeRendering="crispEdges" />
      <Markers items={popupMarkers} />
      <Trades items={popupTrades} />
      <text x="140" y="570" fill={GREY} textLength="157">
        Entry chart(ZN 03-18 (120 Min))
      </text>
      <text x="319" y="878" fill="#8a8a8a" textLength="62">
        03-18 | -0,25
      </text>
      <text x="926" y="890" fill={GREY} textLength="133">
        Time remaining = 00:33:28
      </text>

      <path d="M137 901.500H1153M1075.500 559V932M138 931.500H1076M1076 929.500h5" stroke={GREY} fill="none" />
      <Prices items={popupPrices} x={1076} />
      <text x="1083" y="934" fill={GREY}>0</text>
      <Volume text={popupVolume} x0={157} step={20} base={929} />
      <path d="M138 929.500H1075" stroke="#a6b0a6" />
      <text x="140" y="929" fill={GREY} textLength="124">
        © 2017 NinjaTrader, LLC
      </text>
      <Dates items={popupDates} top={932} baselineY={948} />

      <path d="M746 754H1075" stroke="#deb887" strokeWidth="2" />
      <rect x="686" y="748" width="40" height="14" fill="#000" />
      <text x="693" y="759" fill="#00ff00" textLength="26">
        0'065
      </text>
      <rect x="726.500" y="748.500" width="19" height="13" fill="#ff0000" stroke={GREY} />
      <text x="736" y="759" fill="#fff" textAnchor="middle">
        3
      </text>
      <Tag x={1076.5} y={747.5} w={47} fill="#deb887" color="#000">124'115</Tag>
      <Tag x={1076.5} y={798.5} w={47} fill={BLUE}>124'055</Tag>
      <Tag x={1076.5} y={804.5} w={47} fill="#4b0082">124'050</Tag>
      <Tag x={1076.5} y={915.5} w={34} fill="#0000ff">164K</Tag>

      <rect x="1129.500" y="554.500" width="23" height="23" fill="#f0f0f0" stroke="#8090a0" />
      <rect x="1131" y="556" width="20" height="20" fill="none" stroke="#c8ccd2" />
      <path d="M1136 562h9l-4.500 5z" fill="#000" />
    </Plot>
  );
}

/* ---------- windows ---------- */

export default function App() {
  return (
    <>
      <GlobalStyle />
      <Desktop>
        <MainWindow>
          <TitleBar>
            <LogoIcon />
            <TitleText>{'ZN 12-17 (120 Min)  01.12.2017'}</TitleText>
            <Spacer />
            <LinkButton gap={24}>L</LinkButton>
            <WindowGlyphs width="99" height="20" viewBox="0 3 99 20" stroke="#999" fill="none">
              <path d="M0 10.500H10M45.500 7.500H52.500V14.500H45.500ZM47.500 7.500V5.500H54.500V12.500H52.500M91 5.500L101 15.500M101 5.500L91 15.500" />
            </WindowGlyphs>
          </TitleBar>
          <ChartToolbar contract="ZN 12-17" next="ZN 03-18 | 11.29.2017" />
          <MainChart />
        </MainWindow>

        <FloatingWindow>
          <TitleBar active>
            <LogoIcon />
            <TitleText active>{'ZN 03-18 (120 Min)  01.12.2017'}</TitleText>
            <Spacer />
            <LinkButton active gap={20}>L</LinkButton>
            <WindowGlyphs width="119" height="30" viewBox="0 0 119 30" stroke="#000" fill="none">
              <path d="M0 14.500H10M45.500 9.500H54.500V18.500H45.500ZM91 9L101 19M101 9L91 19" />
            </WindowGlyphs>
          </TitleBar>
          <ChartToolbar contract="ZN 03-18" next="ZN 06-18 | 02.27.2018" />
          <PopupChart />
          <ScrollBar>
            <ScrollButton viewBox="0 0 17 17">
              <path d="M10 5L6.500 8.500L10 12" fill="none" stroke="#505050" strokeWidth="2" />
            </ScrollButton>
            <Spacer />
            <Thumb />
            <ScrollButton viewBox="0 0 17 17">
              <path d="M7 5L10.500 8.500L7 12" fill="none" stroke="#505050" strokeWidth="2" />
            </ScrollButton>
          </ScrollBar>
        </FloatingWindow>
      </Desktop>
    </>
  );
}
